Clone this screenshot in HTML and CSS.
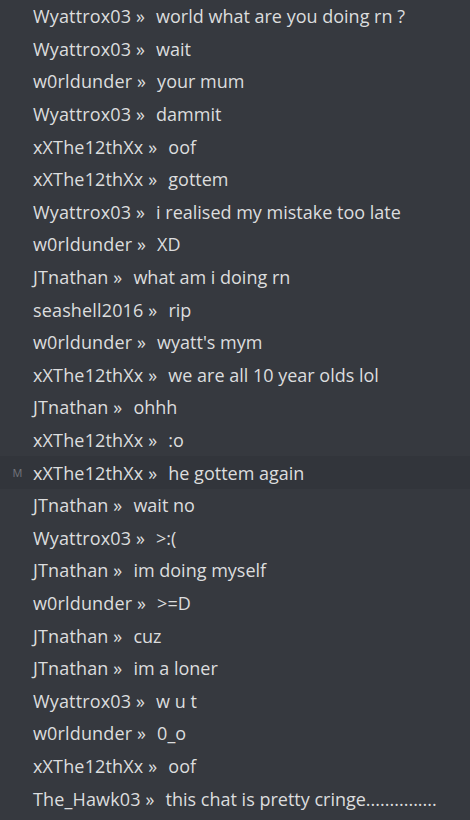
FILE: index.html
```html
<!DOCTYPE html>
<html>
<head>
<meta charset="utf-8">
<link rel="stylesheet" href="styles.css">
</head>
<body>
<div class="chat">
  <div class="row"><span class="mark"></span><span class="name">Wyattrox03 »</span><span class="msg">world what are you doing rn ?</span></div>
  <div class="row"><span class="mark"></span><span class="name">Wyattrox03 »</span><span class="msg">wait</span></div>
  <div class="row"><span class="mark"></span><span class="name">w0rldunder »</span><span class="msg">your mum</span></div>
  <div class="row"><span class="mark"></span><span class="name">Wyattrox03 »</span><span class="msg">dammit</span></div>
  <div class="row"><span class="mark"></span><span class="name">xXThe12thXx »</span><span class="msg">oof</span></div>
  <div class="row"><span class="mark"></span><span class="name">xXThe12thXx »</span><span class="msg">gottem</span></div>
  <div class="row"><span class="mark"></span><span class="name">Wyattrox03 »</span><span class="msg">i realised my mistake too late</span></div>
  <div class="row"><span class="mark"></span><span class="name">w0rldunder »</span><span class="msg">XD</span></div>
  <div class="row"><span class="mark"></span><span class="name">JTnathan »</span><span class="msg">what am i doing rn</span></div>
  <div class="row"><span class="mark"></span><span class="name">seashell2016 »</span><span class="msg">rip</span></div>
  <div class="row"><span class="mark"></span><span class="name">w0rldunder »</span><span class="msg">wyatt's mym</span></div>
  <div class="row"><span class="mark"></span><span class="name">xXThe12thXx »</span><span class="msg">we are all 10 year olds lol</span></div>
  <div class="row"><span class="mark"></span><span class="name">JTnathan »</span><span class="msg">ohhh</span></div>
  <div class="row"><span class="mark"></span><span class="name">xXThe12thXx »</span><span class="msg">:o</span></div>
  <div class="row row-hover"><span class="mark">M</span><span class="name">xXThe12thXx »</span><span class="msg">he gottem again</span></div>
  <div class="row"><span class="mark"></span><span class="name">JTnathan »</span><span class="msg">wait no</span></div>
  <div class="row"><span class="mark"></span><span class="name">Wyattrox03 »</span><span class="msg">&gt;:(</span></div>
  <div class="row"><span class="mark"></span><span class="name">JTnathan »</span><span class="msg">im doing myself</span></div>
  <div class="row"><span class="mark"></span><span class="name">w0rldunder »</span><span class="msg">&gt;=D</span></div>
  <div class="row"><span class="mark"></span><span class="name">JTnathan »</span><span class="msg">cuz</span></div>
  <div class="row"><span class="mark"></span><span class="name">JTnathan »</span><span class="msg">im a loner</span></div>
  <div class="row"><span class="mark"></span><span class="name">Wyattrox03 »</span><span class="msg">w u t</span></div>
  <div class="row"><span class="mark"></span><span class="name">w0rldunder »</span><span class="msg">0_o</span></div>
  <div class="row"><span class="mark"></span><span class="name">xXThe12thXx »</span><span class="msg">oof</span></div>
  <div class="row"><span class="mark"></span><span class="name">The_Hawk03 »</span><span class="msg">this chat is pretty cringe...............</span></div>
</div>
</body>
</html>
```

FILE: styles.css
```css
html, body {
  margin: 0;
  padding: 0;
  background: #36393f;
  height: 100%;
  overflow: hidden;
}
.chat {
  padding-top: 0;
  font-family: "Open Sans", "Noto Sans", sans-serif;
  font-size: 18px;
  color: #dcddde;
}
.row {
  display: flex;
  align-items: center;
  height: 32.6px;
  white-space: nowrap;
}
.row-hover {
  background: #32353b;
}
.mark {
  width: 33px;
  padding-left: 2px;
  box-sizing: border-box;
  font-size: 11px;
  color: #72767d;
  text-align: center;
  flex: none;
}
.name {
  color: #dcddde;
  letter-spacing: 0.15px;
}
.msg {
  margin-left: 11px;
}
```
